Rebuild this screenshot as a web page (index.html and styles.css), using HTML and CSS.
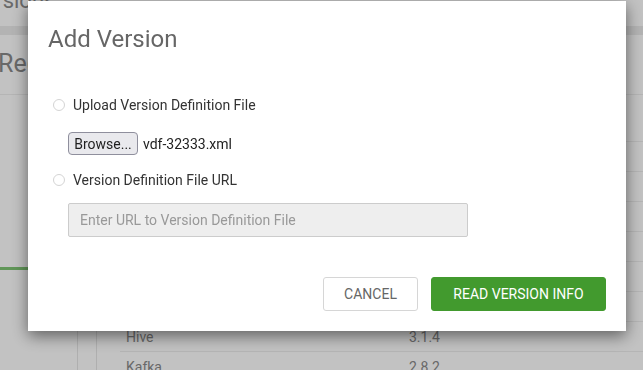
FILE: index.html
```html
<!DOCTYPE html>
<html lang="en">
<head>
    <meta charset="UTF-8">
    <meta name="viewport" content="width=device-width, initial-scale=1.0">
    <title>Versions - Add Version</title>
    <link rel="stylesheet" href="styles.css">
</head>
<body>
<div class="page">
  <div class="crumbs">Versions</div>
  <div class="tabs"></div>
  <h2 class="page-title">Register Version</h2>
  <div class="main">
    <div class="sidenav">
      <div class="nav-item"></div>
      <div class="nav-item"></div>
      <div class="nav-item"></div>
      <div class="nav-item active"></div>
    </div>
    <div class="rail"></div>
    <div class="content">
      <table class="stack">
        <tbody>
          <tr><td>HDFS</td><td>3.3.4</td></tr>
          <tr><td>YARN</td><td>3.3.4</td></tr>
          <tr><td>MapReduce2</td><td>3.3.4</td></tr>
          <tr><td>Tez</td><td>0.10.2</td></tr>
          <tr><td>HBase</td><td>2.4.17</td></tr>
          <tr><td>Pig</td><td>0.17.0</td></tr>
          <tr><td>Sqoop</td><td>1.4.7</td></tr>
          <tr><td>Hive</td><td>3.1.4</td></tr>
          <tr><td>Kafka</td><td>2.8.2</td></tr>
        </tbody>
      </table>
    </div>
  </div>
</div>

<div class="backdrop"></div>

<div class="modal">
  <h4 class="modal-title">Add Version</h4>
  <div class="modal-body">
    <label class="choice"><input type="radio" name="source"> Upload Version Definition File</label>
    <div class="file-row">
      <button class="browse">Browse...</button>
      <span class="file-name">vdf-32333.xml</span>
    </div>
    <label class="choice second"><input type="radio" name="source"> Version Definition File URL</label>
    <input class="url" type="text" placeholder="Enter URL to Version Definition File" disabled>
  </div>
  <div class="modal-footer">
    <button class="btn btn-cancel">CANCEL</button>
    <button class="btn btn-success">READ VERSION INFO</button>
  </div>
</div>
</body>
</html>
```

FILE: styles.css
```css
html, body {
  margin: 0;
  height: 100%;
  overflow: hidden;
}
body {
  font-family: Roboto, "Liberation Sans", sans-serif;
  background-color: #ffffff;
  color: #333;
}

/* page behind the dialog */
.page {
  margin-top: -10px;
}
.crumbs {
  height: 35px;
  margin-left: -30px;
  font-size: 22px;
  line-height: 22px;
  color: #8a8a8a;
}
.tabs {
  height: 9px;
  margin-top: 1px;
  background-color: #ececec;
}
.page-title {
  margin: 14px 0 0 -2px;
  padding-bottom: 15px;
  font-size: 25px;
  line-height: 30px;
  font-weight: normal;
  color: #8a8a8a;
  border-bottom: 1px solid #eeeeee;
  white-space: nowrap;
}
.main {
  display: flex;
}
.sidenav {
  width: 77px;
  border-right: 1px solid #e6e6e6;
  height: 400px;
}
.nav-item {
  height: 43px;
}
.nav-item.active {
  border-bottom: 3px solid #7fc574;
}
.rail {
  width: 18px;
  border-right: 1px solid #e6e6e6;
}
.content {
  flex: 1;
  padding: 17px 0 0 23px;
}
.stack {
  width: 100%;
  border-collapse: collapse;
  font-size: 14px;
  color: #8a8a8a;
}
.stack td {
  height: 29px;
  padding: 0 6px;
  border-bottom: 1px solid #eeeeee;
}
.stack td:first-child {
  width: 271px;
}

.backdrop {
  position: fixed;
  inset: 0;
  background-color: rgba(0, 0, 0, 0.24);
}

/* dialog */
.modal {
  position: fixed;
  left: 28px;
  top: 1px;
  width: 598px;
  background-color: #ffffff;
  box-shadow: 0 5px 15px rgba(0, 0, 0, 0.5);
}
.modal-title {
  margin: 0;
  padding: 24px 20px 0 20px;
  font-size: 24px;
  line-height: 28px;
  font-weight: normal;
  color: #666;
}
.modal-body {
  display: flex;
  flex-direction: column;
  align-items: flex-start;
  padding: 42px 20px 0 20px;
}
.choice {
  display: flex;
  align-items: center;
  height: 20px;
  font-size: 14px;
  color: #333;
}
.choice input {
  appearance: none;
  width: 12px;
  height: 12px;
  margin: 0 8px 0 5px;
  border: 1px solid #d4d4d4;
  border-radius: 50%;
  background-color: #fff;
  box-sizing: border-box;
}
.choice.second {
  margin-top: 15px;
}
.file-row {
  display: flex;
  align-items: center;
  gap: 5px;
  margin: 17px 0 0 20px;
}
.browse {
  width: 70px;
  height: 23px;
  padding: 0;
  font-family: Roboto, "Liberation Sans", sans-serif;
  font-size: 14px;
  color: #1f1f1f;
  background-color: #e9e9ed;
  border: 1px solid #8f8f9d;
  border-radius: 4px;
}
.file-name {
  font-size: 14px;
  color: #222;
}
.url {
  width: 400px;
  height: 34px;
  margin: 13px 0 0 20px;
  padding: 0 11px;
  box-sizing: border-box;
  font-family: Roboto, "Liberation Sans", sans-serif;
  font-size: 14px;
  background-color: #eeeeee;
  border: 1px solid #cccccc;
  border-radius: 2px;
}
.url::placeholder {
  color: #999;
}
.modal-footer {
  display: flex;
  justify-content: flex-end;
  gap: 13px;
  padding: 40px 20px 20px 20px;
}
.btn {
  height: 34px;
  padding: 0;
  font-family: Roboto, "Liberation Sans", sans-serif;
  font-size: 14px;
  color: #666;
  background-color: #fff;
  border: 1px solid #d6d6d6;
  border-radius: 3px;
}
.btn-cancel {
  width: 95px;
}
.btn-success {
  width: 175px;
  color: #fff;
  background-color: #429a2e;
  border-color: #429a2e;
}
```
